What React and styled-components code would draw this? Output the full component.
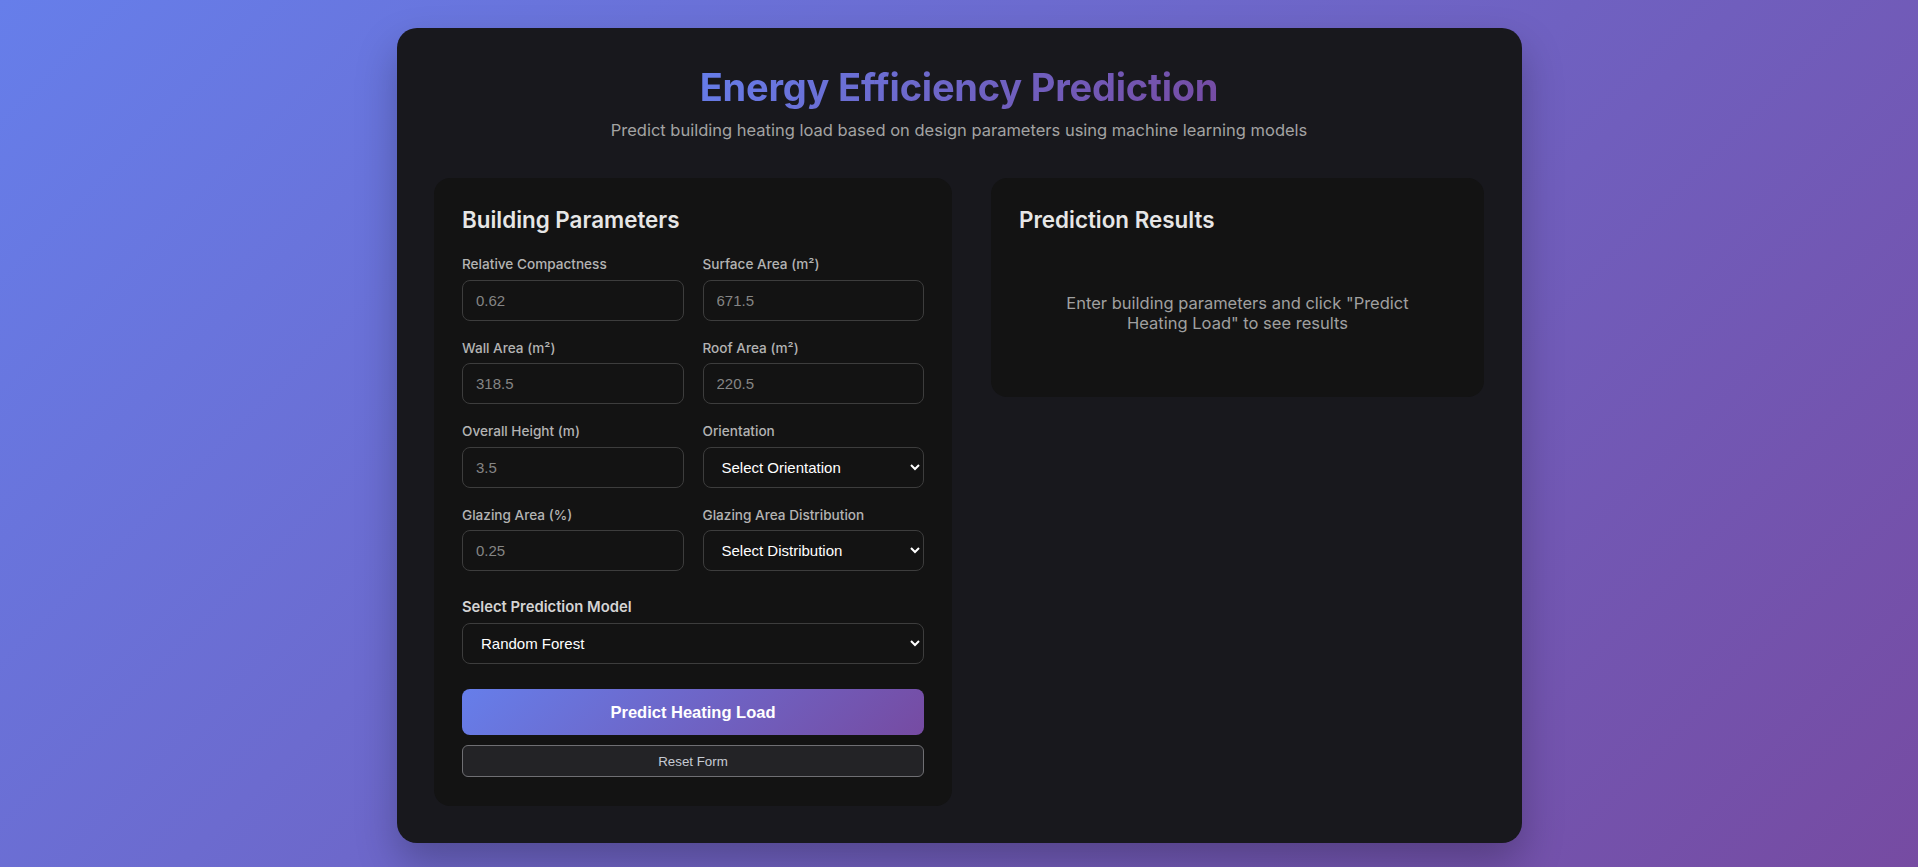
import React from "react";
import styled, { createGlobalStyle } from "styled-components";

const GlobalStyle = createGlobalStyle`
  * { box-sizing: border-box; }
  html, body { margin: 0; padding: 0; }
  body {
    min-height: 100vh;
    background: linear-gradient(135deg, #667eea 0%, #764ba2 100%);
    font-family: Inter, "Noto Sans", sans-serif;
  }
`;

const Page = styled.div`
  padding: 28px 0 24px;
`;

const Card = styled.main`
  width: 1125px;
  margin: 0 auto;
  background: #18181d;
  border-radius: 20px;
  padding: 36px 37.5px 37px;
  box-shadow: 0 20px 40px rgba(0, 0, 0, 0.25);
`;

const Header = styled.header`
  text-align: center;
  margin-bottom: 38px;
`;

const Title = styled.h1`
  margin: 0 0 10px;
  font-family: Inter, sans-serif;
  font-size: 38px;
  font-weight: 700;
  letter-spacing: -0.2px;
  background: linear-gradient(135deg, #667eea 0%, #764ba2 100%);
  -webkit-background-clip: text;
  background-clip: text;
  color: transparent;
  display: inline-block;
`;

const Subtitle = styled.p`
  margin: 0;
  font-size: 16.5px;
  line-height: 20px;
  color: #a3a3a3;
`;

const Columns = styled.div`
  display: grid;
  grid-template-columns: 518px 493px;
  column-gap: 39px;
  align-items: start;
`;

const Panel = styled.section`
  background: #131313;
  border-radius: 16px;
  padding: 28px 28px ${(p) => (p.$tall ? "28.5px" : "28px")};
`;

const PanelTitle = styled.h2`
  margin: 0 0 23px;
  font-size: 22.4px;
  font-weight: 600;
  color: #e6e6e6;
  line-height: 27px;
`;

const FieldGrid = styled.div`
  display: grid;
  grid-template-columns: 1fr 1fr;
  column-gap: 19px;
  row-gap: 19px;
`;

const Field = styled.div`
  display: flex;
  flex-direction: column;
`;

const Label = styled.label`
  font-size: 13.6px;
  line-height: 16.5px;
  font-weight: 500;
  color: #b3b3b3;
  margin-bottom: 7px;
`;

const controlBase = `
  width: 100%;
  height: 41px;
  border: 1px solid #3d3d3d;
  border-radius: 8px;
  background: #131313;
  font-family: "Liberation Sans", Arial, sans-serif;
  font-size: 15px;
  outline: none;
`;

const Input = styled.input`
  ${controlBase}
  padding: 0 13px;
  color: #e6e6e6;
  &::placeholder { color: #858585; }
`;

const Select = styled.select`
  ${controlBase}
  padding: 0 10px 0 14px;
  color: #ffffff;
`;

const ModelSection = styled.div`
  margin-top: 26.5px;
  display: flex;
  flex-direction: column;
`;

const ModelLabel = styled.label`
  font-size: 14.8px;
  line-height: 19px;
  font-weight: 600;
  color: #d4d4d4;
  margin-bottom: 6.5px;
`;

const PrimaryButton = styled.button`
  margin-top: 25px;
  width: 100%;
  height: 46px;
  border: none;
  border-radius: 8px;
  background: linear-gradient(135deg, #667eea 0%, #764ba2 100%);
  color: #ffffff;
  font-family: "Liberation Sans", Arial, sans-serif;
  font-size: 16.5px;
  font-weight: 700;
  cursor: pointer;
`;

const SecondaryButton = styled.button`
  margin-top: 10px;
  width: 100%;
  height: 32px;
  border: 1px solid #6f6f73;
  border-radius: 6px;
  background: #232326;
  color: #c6cad3;
  font-family: "Liberation Sans", Arial, sans-serif;
  font-size: 13.33px;
  cursor: pointer;
`;

const Placeholder = styled.p`
  margin: 0;
  padding: 37px 32px 36px;
  text-align: center;
  font-size: 16.5px;
  line-height: 20px;
  color: #a0a0a0;
`;

const fields = [
  { label: "Relative Compactness", placeholder: "0.62" },
  { label: "Surface Area (m²)", placeholder: "671.5" },
  { label: "Wall Area (m²)", placeholder: "318.5" },
  { label: "Roof Area (m²)", placeholder: "220.5" },
  { label: "Overall Height (m)", placeholder: "3.5" },
  { label: "Orientation", select: "Select Orientation", options: ["North", "East", "South", "West"] },
  { label: "Glazing Area (%)", placeholder: "0.25" },
  { label: "Glazing Area Distribution", select: "Select Distribution", options: ["Uniform", "North", "East", "South", "West"] },
];

export default function App() {
  return (
    <>
      <GlobalStyle />
      <Page>
        <Card>
          <Header>
            <Title>Energy Efficiency Prediction</Title>
            <Subtitle>
              Predict building heating load based on design parameters using machine learning models
            </Subtitle>
          </Header>
          <Columns>
            <Panel $tall>
              <PanelTitle>Building Parameters</PanelTitle>
              <FieldGrid>
                {fields.map((f) => (
                  <Field key={f.label}>
                    <Label>{f.label}</Label>
                    {f.select ? (
                      <Select defaultValue="">
                        <option value="">{f.select}</option>
                        {f.options.map((o) => (
                          <option key={o} value={o}>{o}</option>
                        ))}
                      </Select>
                    ) : (
                      <Input type="number" placeholder={f.placeholder} />
                    )}
                  </Field>
                ))}
              </FieldGrid>
              <ModelSection>
                <ModelLabel>Select Prediction Model</ModelLabel>
                <Select defaultValue="rf">
                  <option value="rf">Random Forest</option>
                  <option value="lr">Linear Regression</option>
                  <option value="gb">Gradient Boosting</option>
                </Select>
              </ModelSection>
              <PrimaryButton>Predict Heating Load</PrimaryButton>
              <SecondaryButton>Reset Form</SecondaryButton>
            </Panel>
            <Panel>
              <PanelTitle>Prediction Results</PanelTitle>
              <Placeholder>
                Enter building parameters and click "Predict Heating Load" to see results
              </Placeholder>
            </Panel>
          </Columns>
        </Card>
      </Page>
    </>
  );
}
